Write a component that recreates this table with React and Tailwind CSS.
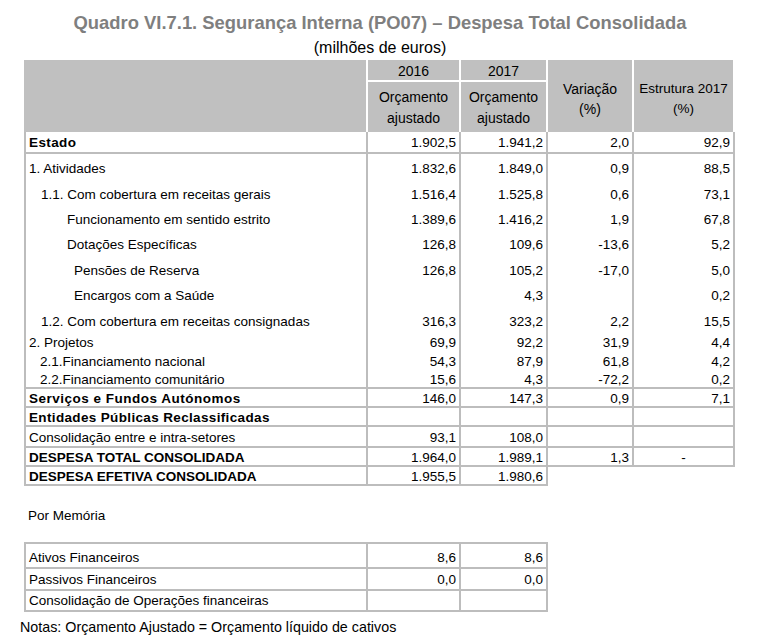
import React from "react";

const B = "border-[#bdbdbd]";

const rows = [
  { label: "Estado", pl: "pl-[3px]", font: "font-bold tracking-[0.4px]", v: ["1.902,5", "1.941,2", "2,0", "92,9"], h: "h-[22px] border-b-2" },
  { label: "1. Atividades", pl: "pl-[3px]", font: "", v: ["1.832,6", "1.849,0", "0,9", "88,5"], h: "h-[27px]" },
  { label: "1.1. Com cobertura em receitas gerais", pl: "pl-[15px]", font: "", v: ["1.516,4", "1.525,8", "0,6", "73,1"], h: "h-[25px]" },
  { label: "Funcionamento em sentido estrito", pl: "pl-[41px]", font: "", v: ["1.389,6", "1.416,2", "1,9", "67,8"], h: "h-[25px]" },
  { label: "Dotações Específicas", pl: "pl-[41px]", font: "", v: ["126,8", "109,6", "-13,6", "5,2"], h: "h-[26px]" },
  { label: "Pensões de Reserva", pl: "pl-[48px]", font: "", v: ["126,8", "105,2", "-17,0", "5,0"], h: "h-[25px]" },
  { label: "Encargos com a Saúde", pl: "pl-[48px]", font: "", v: ["", "4,3", "", "0,2"], h: "h-[26px]" },
  { label: "1.2. Com cobertura em receitas consignadas", pl: "pl-[15px]", font: "", v: ["316,3", "323,2", "2,2", "15,5"], h: "h-[25px]" },
  { label: "2. Projetos", pl: "pl-[3px]", font: "", v: ["69,9", "92,2", "31,9", "4,4"], h: "h-[18px]" },
  { label: "2.1.Financiamento nacional", pl: "pl-[14px]", font: "", v: ["54,3", "87,9", "61,8", "4,2"], h: "h-[19px]" },
  { label: "2.2.Financiamento comunitário", pl: "pl-[14px]", font: "", v: ["15,6", "4,3", "-72,2", "0,2"], h: "h-[19px] border-b-2" },
  { label: "Serviços e Fundos Autónomos", pl: "pl-[3px]", font: "font-bold tracking-[0.5px]", v: ["146,0", "147,3", "0,9", "7,1"], h: "h-[19px] border-b-2" },
  { label: "Entidades Públicas Reclassificadas", pl: "pl-[3px]", font: "font-bold tracking-[0.35px]", v: ["", "", "", ""], h: "h-[19px] border-b-2" },
  { label: "Consolidação entre e intra-setores", pl: "pl-[3px]", font: "", v: ["93,1", "108,0", "", ""], h: "h-[21px] border-b-2" },
  { label: "DESPESA TOTAL CONSOLIDADA", pl: "pl-[3px]", font: "font-bold", v: ["1.964,0", "1.989,1", "1,3", "-"], h: "h-[19px] border-b-2", dash: true },
  { label: "DESPESA EFETIVA CONSOLIDADA", pl: "pl-[3px]", font: "font-bold", v: ["1.955,5", "1.980,6"], h: "h-[19px] border-b-2" },
];

const widths = ["w-[93px]", "w-[87px]", "w-[86px]", "w-[101px]"];

function Row({ r }) {
  return (
    <div className="flex">
      <div className={`w-[344px] border-l-2 border-r-2 ${B} ${r.h} ${r.pl} pt-[3px] ${r.font} flex items-center whitespace-nowrap`}>
        {r.label}
      </div>
      {r.v.map((val, i) => (
        <div
          key={i}
          className={`${widths[i]} border-r-2 ${B} ${r.h} pt-[3px] flex items-center ${r.dash && i === 3 ? "justify-center" : "justify-end pr-[3px]"}`}
        >
          {val}
        </div>
      ))}
    </div>
  );
}

const memo = [
  { label: "Ativos Financeiros", v: ["8,6", "8,6"], h: "h-[27px] border-t-2 border-b-2 pt-[5px]" },
  { label: "Passivos Financeiros", v: ["0,0", "0,0"], h: "h-[22px] border-b-2 pt-[2px]" },
  { label: "Consolidação de Operações financeiras", v: ["", ""], h: "h-[21px] border-b-2 pt-[2px]" },
];

export default function App() {
  return (
    <div className="w-[762px] h-[642px] bg-white text-black overflow-hidden" style={{ fontFamily: '"Liberation Sans", Arial, sans-serif' }}>
      <div className="pt-[12px] w-[760px]">
        <div className="text-center text-[18.4px] leading-[22px] font-bold text-[#7f7f7f]">
          Quadro VI.7.1. Segurança Interna (PO07) – Despesa Total Consolidada
        </div>
        <div className="text-center text-[16px] leading-[18px] mt-[5px]">(milhões de euros)</div>
      </div>

      <div className="ml-[24px] mt-[3px] text-[13.5px]">
        <div className="grid grid-cols-[342px_91px_85px_84px_99px] grid-rows-[20px_50px] gap-[2px] w-[709px] text-[14px]">
          <div className="row-span-2 bg-[#c0c0c0]"></div>
          <div className="bg-[#c0c0c0] flex items-center justify-center leading-[20px] pt-[1px]">2016</div>
          <div className="bg-[#c0c0c0] flex items-center justify-center leading-[20px] pt-[1px]">2017</div>
          <div className="row-span-2 bg-[#c0c0c0] flex items-center justify-center text-center leading-[20px] pt-[5px]">
            Variação<br />(%)
          </div>
          <div className="row-span-2 bg-[#c0c0c0] flex items-center justify-center text-center leading-[20px] pt-[5px] text-[13.5px]">
            Estrutura 2017<br />(%)
          </div>
          <div className="bg-[#c0c0c0] flex items-center justify-center text-center leading-[21.5px] pt-[2px]">
            Orçamento<br />ajustado
          </div>
          <div className="bg-[#c0c0c0] flex items-center justify-center text-center leading-[21.5px] pt-[2px]">
            Orçamento<br />ajustado
          </div>
        </div>

        <div>
          {rows.map((r, i) => (
            <Row key={i} r={r} />
          ))}
        </div>

        <div className="mt-[22px] pl-[4px] leading-[16px]">Por Memória</div>

        <div className="mt-[18px]">
          {memo.map((r, i) => (
            <div className="flex" key={i}>
              <div className={`w-[344px] border-l-2 border-r-2 ${B} ${r.h} pl-[3px] flex items-center`}>{r.label}</div>
              <div className={`w-[93px] border-r-2 ${B} ${r.h} pr-[3px] flex items-center justify-end`}>{r.v[0]}</div>
              <div className={`w-[87px] border-r-2 ${B} ${r.h} pr-[3px] flex items-center justify-end`}>{r.v[1]}</div>
            </div>
          ))}
        </div>
      </div>

      <div className="mt-[6px] pl-[20px] text-[14.3px] leading-[18px]">
        Notas: Orçamento Ajustado = Orçamento líquido de cativos
      </div>
    </div>
  );
}
